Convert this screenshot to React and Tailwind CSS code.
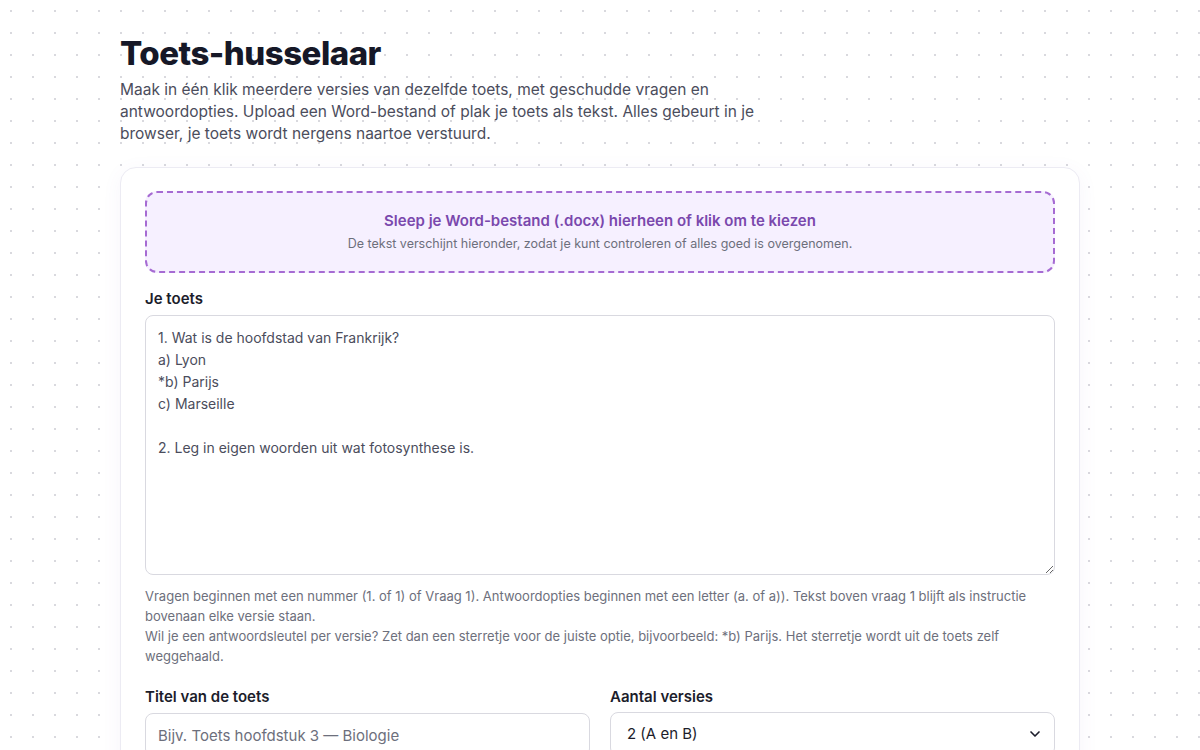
import React, { useState } from 'react';
import { ChevronDown } from 'lucide-react';

const sample = `1. Wat is de hoofdstad van Frankrijk?
a) Lyon
*b) Parijs
c) Marseille

2. Leg in eigen woorden uit wat fotosynthese is.`;

export default function App() {
  const [text, setText] = useState(sample);
  const [title, setTitle] = useState('');
  const [versions, setVersions] = useState('2');

  return (
    <div className="min-h-screen bg-white bg-[radial-gradient(#d9d9de_1px,transparent_1.2px)] bg-[size:22px_22px] bg-[position:0px_0px] font-['Inter',sans-serif] text-[#1c1d2b]">
      <div className="mx-auto w-[960px] pt-[33px] pb-10">
        <h1 className="text-[33px] leading-[40px] font-extrabold tracking-[-0.5px] text-[#161827]">Toets-husselaar</h1>
        <p className="mt-[6px] max-w-[650px] text-[15.5px] leading-[22px] text-[#4b4d5c]">
          Maak in één klik meerdere versies van dezelfde toets, met geschudde vragen en antwoordopties. Upload een Word-bestand of plak je toets als tekst. Alles gebeurt in je browser, je toets wordt nergens naartoe verstuurd.
        </p>

        <div className="mt-[22px] rounded-2xl border border-[#ecebf3] bg-white px-6 pt-6 pb-8 shadow-[0_4px_20px_rgba(120,90,180,0.06)]">
          <div className="-mt-px flex h-[82px] cursor-pointer flex-col items-center justify-center rounded-xl border-2 border-dashed border-[#a66bd3] bg-[#f6f0ff]">
            <div className="text-[15px] font-semibold text-[#7a48ad]">Sleep je Word-bestand (.docx) hierheen of klik om te kiezen</div>
            <div className="mt-[3px] text-[12.5px] text-[#6d6f7c]">De tekst verschijnt hieronder, zodat je kunt controleren of alles goed is overgenomen.</div>
          </div>

          <label className="mt-[15px] block text-[15px] font-semibold text-[#1c1d2b]">Je toets</label>
          <textarea
            className="mt-[4px] block h-[260px] w-full resize-y rounded-lg border border-[#d9d9e0] px-3 pt-[11px] text-[14px] leading-[22px] text-[#4b4d5c] focus:outline-none"
            value={text}
            onChange={(e) => setText(e.target.value)}
          />
          <div className="mt-[11px] text-[13px] leading-[20px] text-[#6d6f7c]">
            <p>Vragen beginnen met een nummer (1. of 1) of Vraag 1). Antwoordopties beginnen met een letter (a. of a)). Tekst boven vraag 1 blijft als instructie bovenaan elke versie staan.</p>
            <p>Wil je een antwoordsleutel per versie? Zet dan een sterretje voor de juiste optie, bijvoorbeeld: *b) Parijs. Het sterretje wordt uit de toets zelf weggehaald.</p>
          </div>

          <div className="mt-[20px] grid grid-cols-2 gap-5">
            <div>
              <label className="block text-[15px] font-semibold text-[#1c1d2b]">Titel van de toets</label>
              <input
                className="mt-[5px] block h-[44px] w-full rounded-lg border border-[#d9d9e0] px-3 text-[15px] text-[#1c1d2b] placeholder:text-[#6d6f7c] focus:outline-none"
                placeholder="Bijv. Toets hoofdstuk 3 — Biologie"
                value={title}
                onChange={(e) => setTitle(e.target.value)}
              />
            </div>
            <div>
              <label className="block text-[15px] font-semibold text-[#1c1d2b]">Aantal versies</label>
              <div className="relative mt-[4px]">
                <select
                  className="block h-[44px] w-full appearance-none rounded-lg border border-[#d9d9e0] bg-white px-4 text-[15px] text-[#1c1d2b] focus:outline-none"
                  value={versions}
                  onChange={(e) => setVersions(e.target.value)}
                >
                  <option value="2">2 (A en B)</option>
                  <option value="3">3 (A, B en C)</option>
                  <option value="4">4 (A t/m D)</option>
                </select>
                <ChevronDown className="pointer-events-none absolute right-3 top-1/2 h-4 w-4 -translate-y-1/2 text-[#1c1d2b]" strokeWidth={2.5} />
              </div>
            </div>
          </div>
        </div>
      </div>
    </div>
  );
}
